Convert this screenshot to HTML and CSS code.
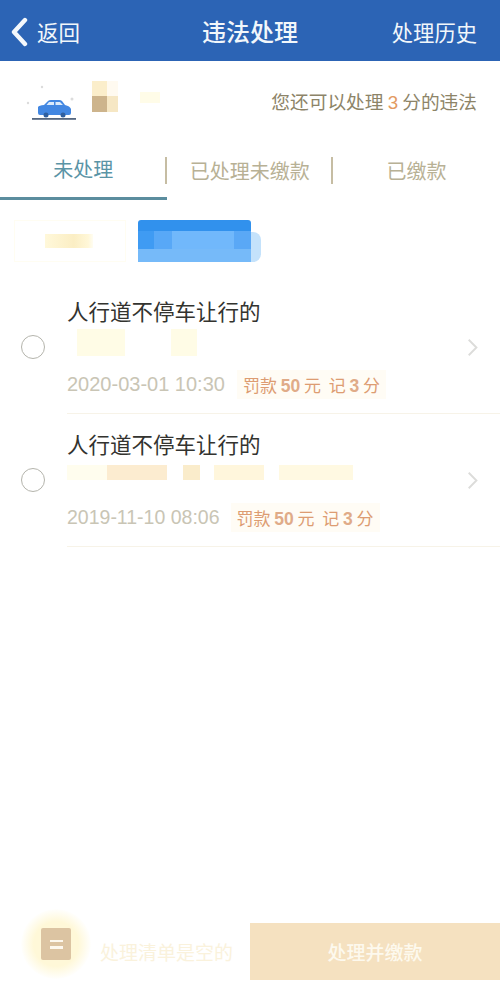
FILE: index.html
```html
<!DOCTYPE html>
<html lang="zh">
<head>
<meta charset="utf-8">
<title>违法处理</title>
<link rel="stylesheet" href="styles.css">
</head>
<body>
<div class="page">
  <header class="nav">
    <div class="back">
      <svg class="back-icon" viewBox="0 0 20 30"><path d="M16 3 L5 15 L16 27" fill="none" stroke="#f4f8fc" stroke-width="4.4" stroke-linecap="round" stroke-linejoin="round"/></svg>
      <span>返回</span>
    </div>
    <h1>违法处理</h1>
    <div class="history">处理历史</div>
  </header>

  <section class="summary">
    <div class="car-wrap">
      <svg class="car" viewBox="0 0 60 44">
        <circle cx="20" cy="4" r="1.200" fill="#dcdcdc"/><circle cx="6" cy="20" r="1.200" fill="#dcdcdc"/><circle cx="50" cy="16" r="1.500" fill="#dcdcdc"/>
        <path d="M16 24 Q17 22.500 22 22 L26 18 Q27 17 29 17 L37 17 Q39 17 40 18 L43 22 Q48 23 49 26 L49 30 Q49 32 47 32 L18 32 Q16 32 16 30 Z" fill="#4287e2"/>
        <path d="M27 19 L32 19 L32 22 L24.500 22 Z M33.500 19 L38 19 L41 22 L33.500 22 Z" fill="#dcebfb"/>
        <circle cx="24" cy="32" r="2.500" fill="#2f5f9e"/><circle cx="41" cy="32" r="2.500" fill="#2f5f9e"/>
        <rect x="10" y="35" width="44" height="1.800" fill="#55677f"/>
      </svg>
      <div class="mosaic-plate">
        <span class="m m1"></span><span class="m m2"></span><span class="m m3"></span><span class="m m4"></span>
      </div>
      <span class="plate-tail"></span>
    </div>
    <p class="remain">您还可以处理 <em>3</em> 分的违法</p>
  </section>

  <nav class="tabs">
    <div class="tab active">未处理</div>
    <div class="tab">已处理未缴款</div>
    <div class="tab">已缴款</div>
  </nav>

  <section class="chips">
    <div class="chip-light"><span class="chip-light-blur"></span></div>
    <div class="chip-blue">
      <span class="blue-top"></span>
      <span class="blue-mid"></span>
      <span class="blue-low"></span>
    </div>
    <span class="blue-tail"></span>
  </section>

  <section class="list">
    <article class="item">
      <span class="radio"></span>
      <div class="body">
        <div class="title">人行道不停车让行的</div>
        <div class="addr"><span class="addr-blur a1"></span><span class="addr-blur a2"></span></div>
        <div class="meta"><span class="time time-wide">2020-03-01 10:30</span><span class="fine">罚款 <b>50</b> 元&nbsp;&nbsp;记 <b>3</b> 分</span></div>
      </div>
      <svg class="chev" viewBox="0 0 14 22"><path d="M2 2 L11 11 L2 20" fill="none" stroke="#dcdcda" stroke-width="2.200"/></svg>
    </article>
    <article class="item">
      <span class="radio"></span>
      <div class="body">
        <div class="title">人行道不停车让行的</div>
        <div class="addr addr-row">
          <span class="addr-blur b1"></span><span class="addr-blur b2"></span><span class="addr-blur b3"></span><span class="addr-blur b4"></span><span class="addr-blur b5"></span>
        </div>
        <div class="meta"><span class="time">2019-11-10 08:06</span><span class="fine">罚款 <b>50</b> 元&nbsp;&nbsp;记 <b>3</b> 分</span></div>
      </div>
      <svg class="chev" viewBox="0 0 14 22"><path d="M2 2 L11 11 L2 20" fill="none" stroke="#dcdcda" stroke-width="2.200"/></svg>
    </article>
  </section>

  <footer class="bottom">
    <div class="basket">
      <div class="glow"><div class="basket-icon"><span></span><span></span></div></div>
    </div>
    <div class="empty">处理清单是空的</div>
    <div class="pay">处理并缴款</div>
  </footer>
</div>
</body>
</html>
```
FILE: styles.css
```css
* { box-sizing: border-box; }
html, body { margin: 0; padding: 0; background: #fff; }
body { font-family: "Noto Sans CJK SC", "Liberation Sans", sans-serif; }
.page { width: 500px; height: 987px; display: flex; flex-direction: column; overflow: hidden; }

.nav { height: 61px; background: #2c64b5; color: #f2f7fb; display: flex; align-items: center; justify-content: space-between; padding: 2px 23px 0 9px; position: relative; flex: none; }
.back { display: flex; align-items: center; font-size: 21.500px; gap: 8px; }
.back-icon { width: 20px; height: 30px; }
.nav h1 { margin: 0; font-size: 24px; font-weight: 500; position: absolute; left: 0; right: 0; top: 13px; text-align: center; line-height: 36px; }
.history { font-size: 21.300px; }

.summary { height: 78px; display: flex; align-items: center; justify-content: space-between; padding: 0 23px 0 22px; flex: none; }
.car-wrap { display: flex; align-items: flex-start; width: 150px; height: 60px; }
.car { width: 60px; height: 44px; margin-top: 13px; flex: none; }
.mosaic-plate { display: grid; grid-template-columns: 15px 11px; grid-template-rows: 15px 16px; margin: 11px 0 0 10px; flex: none; }
.m { display: block; }
.m1 { background: #fbeecb; }
.m2 { background: #fffaf0; }
.m3 { background: #cdb48c; }
.m4 { background: #f6e7c4; }
.plate-tail { width: 20px; height: 11px; background: #fffce8; margin: 22px 0 0 22px; flex: none; }
.remain { margin: 0; padding-top: 1px; font-size: 18.700px; color: #8d8468; white-space: nowrap; }
.remain em { font-style: normal; color: #e39a62; font-family: "Liberation Sans", sans-serif; }

.tabs { display: flex; height: 61px; flex: none; }
.tab { flex: 1; display: flex; align-items: center; justify-content: center; font-size: 20px; color: #b8b195; position: relative; padding-top: 1px; }
.tab:nth-child(1)::after, .tab:nth-child(2)::after { content: ""; position: absolute; right: 0; top: 18px; height: 27px; width: 2px; background: #c6bda3; }
.tab:nth-child(1) { flex: 0 0 166.500px; }
.tab:nth-child(2) { flex: 0 0 166.500px; }
.tab.active { color: #5a94a6; border-bottom: 3px solid #5b8d9e; }

.chips { display: flex; align-items: flex-start; height: 90px; padding: 20px 0 0 14px; flex: none; }
.chip-light { width: 112px; height: 42px; border: 1px solid #fffdf2; display: flex; align-items: center; padding-left: 30px; }
.chip-light-blur { display: block; width: 48px; height: 14px; background: linear-gradient(90deg, #fff8da, #fbeec4 60%, #fff7d8 90%, #fffdf2); }
.chip-blue { width: 113px; height: 42px; margin-left: 12px; display: flex; flex-direction: column; }
.blue-top { display: block; height: 11px; background: #3191ed; border-radius: 3px 3px 0 0; }
.blue-mid { display: block; height: 18px; background: linear-gradient(90deg, #3f9bf3 0 14%, #58a8f7 14% 30%, #71b8fb 30% 85%, #5aa8f6 85%); }
.blue-low { display: block; height: 13px; background: #76baf9; }
.blue-tail { display: block; width: 10px; height: 30px; margin-top: 12px; background: #c4e2fb; border-radius: 0 8px 8px 0; }

.list { flex: none; }
.item { display: flex; align-items: center; height: 133px; position: relative; padding-left: 21px; }
.item:first-child { height: 124px; align-items: flex-start; }
.item:first-child .radio { margin-top: 45px; }
.item + .item .radio { margin-bottom: 2px; }
.radio { width: 24px; height: 24px; border: 1.500px solid #b4b4ac; border-radius: 50%; flex: none; }
.body { margin-left: 22px; flex: 1; min-width: 0; align-self: stretch; border-bottom: 1px solid #f7f3e8; display: flex; flex-direction: column; }
.item .body { padding-top: 14px; }
.item:first-child .body { padding-top: 5px; }
.title { font-size: 21.500px; line-height: 32px; color: #33332f; white-space: nowrap; }
.addr { height: 32px; margin-left: 10px; margin-right: 179px; padding-top: 2px; display: flex; }
.addr-blur { display: block; height: 27px; background: #fffce6; }
.a1 { width: 48px; }
.a2 { width: 26px; margin-left: 46px; }
.addr-row { margin-left: 0; margin-right: 0; padding-top: 0; align-items: center; height: 24px; }
.addr-row .addr-blur { height: 15px; }
.b1 { width: 40px; background: #fffdee; }
.b2 { width: 60px; background: #fcecd0; }
.b3 { width: 17px; margin-left: 16px; background: #faeccb; }
.b4 { width: 50px; margin-left: 14px; background: #fff6dc; }
.b5 { width: 74px; margin-left: 15px; background: #fff9e2; }
.meta { display: flex; align-items: center; height: 32px; margin-top: 9px; }
.item + .item .meta { margin-top: 17px; }
.time { font-size: 19.500px; color: #c9c5b5; font-family: "Liberation Sans", sans-serif; white-space: nowrap; }
.time-wide { font-size: 20px; }
.fine { margin-left: 12px; font-size: 17px; color: #dd9c72; white-space: nowrap; background: #fffcf5; padding: 2px 6px; }
.item + .item .fine { margin-left: 11px; }
.fine b { font-weight: 700; font-family: "Liberation Sans", sans-serif; font-size: 17.500px; color: #e0ab88; }
.chev { position: absolute; right: 21px; top: 0; bottom: 0; margin: auto 0; width: 12px; height: 19px; }
.item:first-child .chev { bottom: 10px; }

.bottom { margin-top: auto; margin-bottom: 7px; height: 57px; display: flex; align-items: stretch; flex: none; }
.basket { width: 100px; flex: none; }
.glow { width: 70px; height: 70px; margin: -14px 0 0 21px; border-radius: 50%; background: radial-gradient(circle, #fff8d8 45%, #ffffff 72%); display: flex; align-items: center; justify-content: center; }
.basket-icon { width: 30px; height: 32px; background: #dcc4a2; border-radius: 2px; display: flex; flex-direction: column; align-items: center; justify-content: center; gap: 4px; }
.basket-icon span { display: block; width: 13px; height: 2.500px; background: #fdf8ee; }
.empty { width: 150px; flex: none; font-size: 19px; color: #faf2dc; display: flex; align-items: center; white-space: nowrap; }
.pay { flex: 1; background: #f5e1c0; color: #fdf9ee; font-size: 19px; font-weight: 500; display: flex; align-items: center; justify-content: center; }
```
